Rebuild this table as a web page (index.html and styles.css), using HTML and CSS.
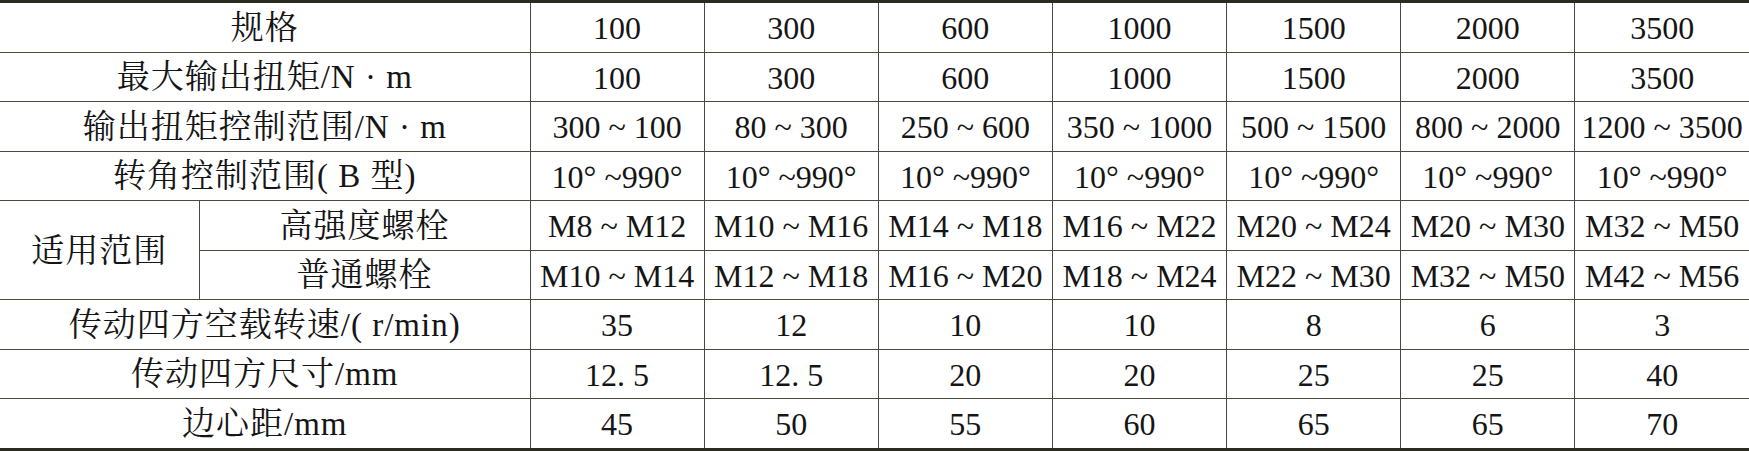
FILE: index.html
```html
<!DOCTYPE html>
<html>
<head>
    <title>技术参数</title>
    <link rel="stylesheet" href="styles.css">
</head>
<body>
    <table class="spec">
        <colgroup>
            <col class="c-group">
            <col class="c-sub">
            <col class="c-val"><col class="c-val"><col class="c-val"><col class="c-val">
            <col class="c-val"><col class="c-val"><col class="c-val">
        </colgroup>
        <tr>
            <td class="label" colspan="2">规格</td>
            <td>100</td><td>300</td><td>600</td><td>1000</td><td>1500</td><td>2000</td><td>3500</td>
        </tr>
        <tr>
            <td class="label" colspan="2">最大输出扭矩/N · m</td>
            <td>100</td><td>300</td><td>600</td><td>1000</td><td>1500</td><td>2000</td><td>3500</td>
        </tr>
        <tr>
            <td class="label" colspan="2">输出扭矩控制范围/N · m</td>
            <td>300 ~ 100</td><td>80 ~ 300</td><td>250 ~ 600</td><td>350 ~ 1000</td><td>500 ~ 1500</td><td>800 ~ 2000</td><td>1200 ~ 3500</td>
        </tr>
        <tr>
            <td class="label" colspan="2">转角控制范围( B 型)</td>
            <td>10° ~990°</td><td>10° ~990°</td><td>10° ~990°</td><td>10° ~990°</td><td>10° ~990°</td><td>10° ~990°</td><td>10° ~990°</td>
        </tr>
        <tr>
            <td class="label" rowspan="2">适用范围</td>
            <td class="label">高强度螺栓</td>
            <td>M8 ~ M12</td><td>M10 ~ M16</td><td>M14 ~ M18</td><td>M16 ~ M22</td><td>M20 ~ M24</td><td>M20 ~ M30</td><td>M32 ~ M50</td>
        </tr>
        <tr>
            <td class="label">普通螺栓</td>
            <td>M10 ~ M14</td><td>M12 ~ M18</td><td>M16 ~ M20</td><td>M18 ~ M24</td><td>M22 ~ M30</td><td>M32 ~ M50</td><td>M42 ~ M56</td>
        </tr>
        <tr>
            <td class="label" colspan="2">传动四方空载转速/( r/min)</td>
            <td>35</td><td>12</td><td>10</td><td>10</td><td>8</td><td>6</td><td>3</td>
        </tr>
        <tr>
            <td class="label" colspan="2">传动四方尺寸/mm</td>
            <td>12. 5</td><td>12. 5</td><td>20</td><td>20</td><td>25</td><td>25</td><td>40</td>
        </tr>
        <tr>
            <td class="label" colspan="2">边心距/mm</td>
            <td>45</td><td>50</td><td>55</td><td>60</td><td>65</td><td>65</td><td>70</td>
        </tr>
    </table>
</body>
</html>
```

FILE: styles.css
```css
body {
    margin: 0;
    background: #fff;
    font-family: "Liberation Serif", "Noto Serif CJK SC", "Noto Sans CJK SC", serif;
    color: #151515;
}
.spec {
    width: 1749px;
    table-layout: fixed;
    border-collapse: collapse;
    border-top: 3px solid #2c2b22;
    border-bottom: 4px solid #2c2b22;
    border-left: hidden;
    border-right: hidden;
}
.c-group {
    width: 199px;
}
.c-sub {
    width: 331px;
}
.spec td {
    height: 46.5px;
    padding: 2px 0 0;
    border: 1px solid #4a4a40;
    text-align: center;
    vertical-align: middle;
    font-size: 32px;
    line-height: 1;
    white-space: nowrap;
}
.spec td.label {
    font-size: 33px;
    letter-spacing: 1px;
}
```
